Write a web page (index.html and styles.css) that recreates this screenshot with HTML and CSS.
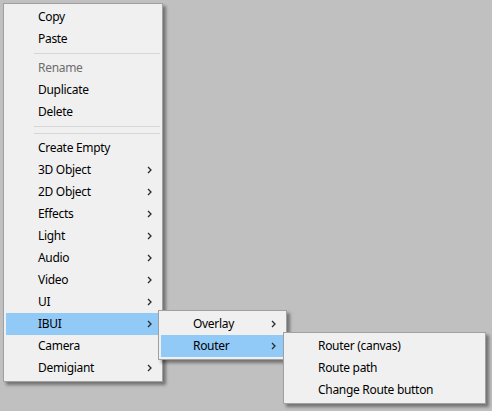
FILE: index.html
```html
<!DOCTYPE html>
<html>
<head>
<meta charset="utf-8">
<link rel="stylesheet" href="styles.css">
</head>
<body>
<div class="desk">
  <div class="menu menu-main">
    <div class="item">Copy</div>
    <div class="item">Paste</div>
    <div class="sep"></div>
    <div class="item disabled">Rename</div>
    <div class="item">Duplicate</div>
    <div class="item">Delete</div>
    <div class="sep"></div>
    <div class="sep"></div>
    <div class="item">Create Empty</div>
    <div class="item sub">3D Object<svg class="chev" viewBox="0 0 5 8"><polyline points="1,1 4,4 1,7"/></svg></div>
    <div class="item sub">2D Object<svg class="chev" viewBox="0 0 5 8"><polyline points="1,1 4,4 1,7"/></svg></div>
    <div class="item sub">Effects<svg class="chev" viewBox="0 0 5 8"><polyline points="1,1 4,4 1,7"/></svg></div>
    <div class="item sub">Light<svg class="chev" viewBox="0 0 5 8"><polyline points="1,1 4,4 1,7"/></svg></div>
    <div class="item sub">Audio<svg class="chev" viewBox="0 0 5 8"><polyline points="1,1 4,4 1,7"/></svg></div>
    <div class="item sub">Video<svg class="chev" viewBox="0 0 5 8"><polyline points="1,1 4,4 1,7"/></svg></div>
    <div class="item sub">UI<svg class="chev" viewBox="0 0 5 8"><polyline points="1,1 4,4 1,7"/></svg></div>
    <div class="item sub active">IBUI<svg class="chev" viewBox="0 0 5 8"><polyline points="1,1 4,4 1,7"/></svg></div>
    <div class="item">Camera</div>
    <div class="item sub">Demigiant<svg class="chev" viewBox="0 0 5 8"><polyline points="1,1 4,4 1,7"/></svg></div>
  </div>

  <div class="menu menu-ibui">
    <div class="item sub">Overlay<svg class="chev" viewBox="0 0 5 8"><polyline points="1,1 4,4 1,7"/></svg></div>
    <div class="item sub active">Router<svg class="chev" viewBox="0 0 5 8"><polyline points="1,1 4,4 1,7"/></svg></div>
  </div>

  <div class="menu menu-router">
    <div class="item">Router (canvas)</div>
    <div class="item">Route path</div>
    <div class="item">Change Route button</div>
  </div>
</div>
</body>
</html>
```

FILE: styles.css
```css
html, body {
  margin: 0;
  padding: 0;
  background: #c0c0c0;
}

.desk {
  position: relative;
  width: 492px;
  height: 411px;
  overflow: hidden;
  font-family: "Segoe UI", "Noto Sans", "Open Sans", sans-serif;
  font-size: 12px;
  letter-spacing: -0.3px;
  color: #000;
}

.menu {
  position: absolute;
  box-sizing: border-box;
  background: #f0f0f0;
  border: 1px solid #a0a0a0;
  padding: 2px;
  box-shadow: 3px 3px 3px rgba(0, 0, 0, 0.4);
  display: flex;
  flex-direction: column;
}

.menu-main {
  left: 3px;
  top: 3px;
  width: 160px;
}

.menu-ibui {
  left: 158px;
  top: 310px;
  width: 129px;
}

.menu-router {
  left: 283px;
  top: 332px;
  width: 203px;
}

.item {
  height: 22px;
  line-height: 22px;
  padding-left: 32px;
  padding-right: 8px;
  display: flex;
  align-items: center;
  justify-content: space-between;
  white-space: nowrap;
}

.item.disabled {
  color: #6d6d6d;
}

.item.active {
  background: #91c9f7;
}

.chev {
  width: 5px;
  height: 8px;
  fill: none;
  stroke: #2a2a2a;
  stroke-width: 1.3;
}

.sep {
  height: 7px;
  display: flex;
  align-items: center;
  padding-left: 28px;
}

.sep::after {
  content: "";
  display: block;
  flex: 1;
  height: 1px;
  background: #d7d7d7;
}
```
